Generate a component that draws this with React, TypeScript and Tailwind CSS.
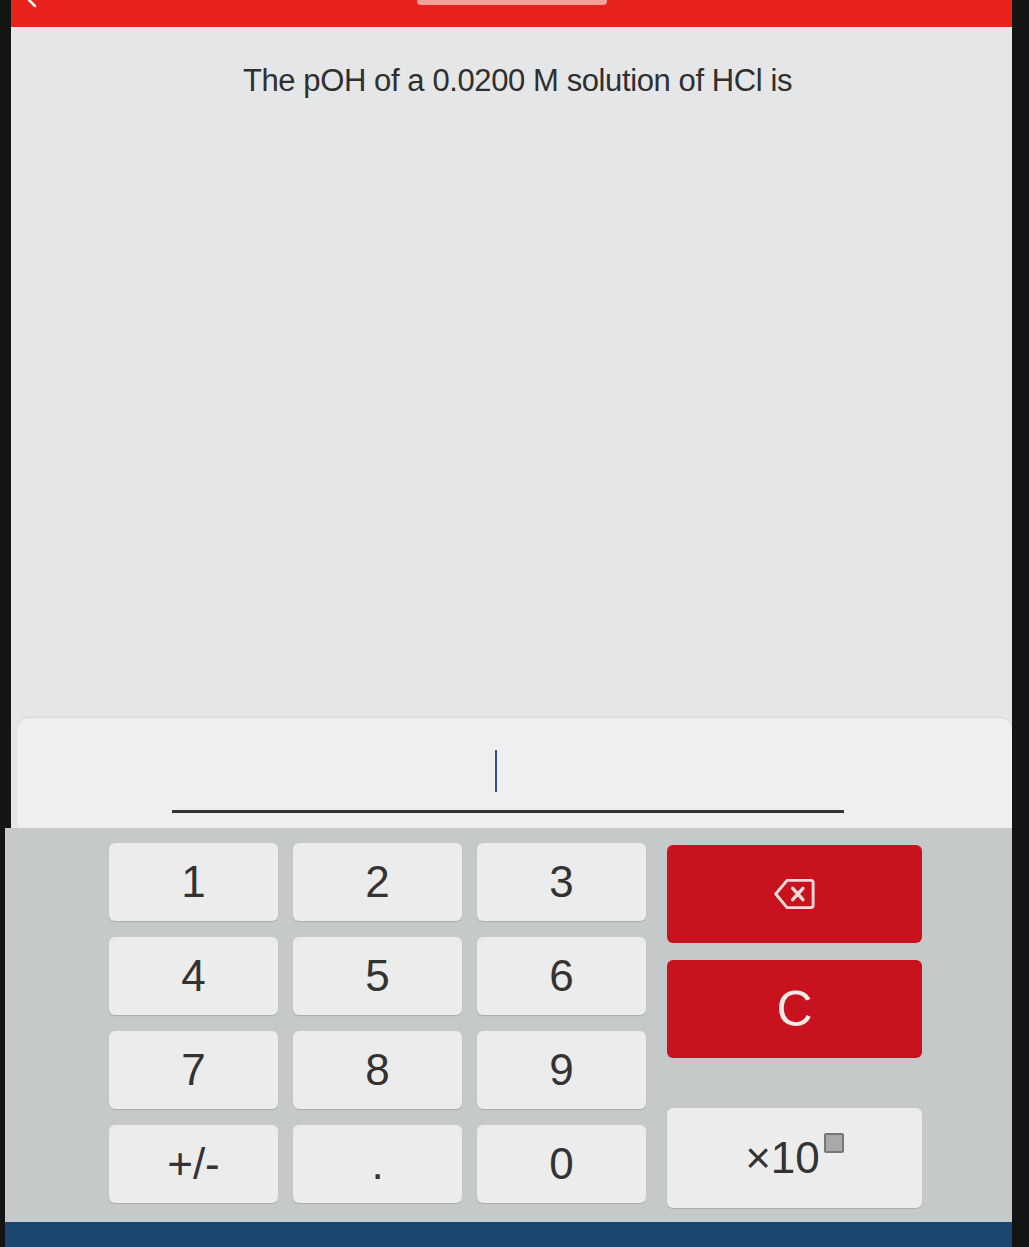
import React from 'react';

const keys = ['1', '2', '3', '4', '5', '6', '7', '8', '9', '+/-', '.', '0'];

const App: React.FC = () => {
  return (
    <div className="w-[1029px] h-[1247px] bg-[#141414] flex overflow-hidden font-['Liberation_Sans',Arial,sans-serif]">
      <div className="w-[11px] shrink-0" />
      <div className="flex-1 flex flex-col">
        {/* header */}
        <div className="h-[27px] shrink-0 bg-[#e8231c] relative flex justify-center">
          <svg className="absolute left-[14px] top-0" width="14" height="10" viewBox="0 0 14 10" fill="none" stroke="#fff" strokeWidth="2.5" strokeLinecap="round">
            <path d="M4 0 L10 6" />
          </svg>
          <div className="w-[190px] h-[5px] bg-[#f2a09a] rounded-b" />
        </div>

        {/* question */}
        <div className="flex-1 bg-[#e5e6e7] flex flex-col">
          <p className="pt-[31px] pl-[12px] text-center text-[31px] text-[#2f2f2f] tracking-[-0.4px]">
            The pOH of a 0.0200 M solution of HCl is
          </p>
        </div>

        {/* answer field */}
        <div className="bg-[#e5e6e7] pl-[6px] shrink-0">
          <div className="h-[110px] bg-[#efefef] rounded-t-[12px] flex flex-col items-center pt-[32px] pr-[8px] shadow-[0_-1px_2px_rgba(0,0,0,0.08)]">
            <div className="w-[2px] h-[42px] bg-[#3b4a9a] -ml-[30px]" />
            <div className="mt-[18px] w-[672px] h-[3px] bg-[#333] -ml-[6px]" />
          </div>
        </div>

        {/* keypad */}
        <div className="h-[394px] shrink-0 bg-[#c6c9ca] -ml-[6px] flex pt-[15px] pl-[104px] gap-[21px]">
          <div className="grid grid-cols-[169px_169px_169px] auto-rows-[78px] gap-x-[15px] gap-y-[16px]">
            {keys.map(k => (
              <button
                key={k}
                className="bg-[#ececec] rounded-[6px] text-[#333] text-[44px] flex items-center justify-center shadow-[0_1px_1px_rgba(0,0,0,0.15)]"
              >
                {k}
              </button>
            ))}
          </div>
          <div className="w-[255px] flex flex-col pt-[2px]">
            <button className="h-[98px] bg-[#c8121d] rounded-[6px] flex items-center justify-center">
              <svg width="44" height="34" viewBox="0 0 38 30" fill="none" stroke="#f4d9d9" strokeWidth="2.6" strokeLinejoin="round">
                <path d="M12 3 H33 a2 2 0 0 1 2 2 V25 a2 2 0 0 1 -2 2 H12 L2 15 Z" />
                <path d="M17 10 L26 20 M26 10 L17 20" strokeLinecap="round" strokeWidth="3" />
              </svg>
            </button>
            <button className="mt-[17px] h-[98px] bg-[#c8121d] rounded-[6px] text-[#f8e8e8] text-[50px] flex items-center justify-center">
              C
            </button>
            <button className="mt-[50px] h-[100px] bg-[#ececec] rounded-[6px] text-[#333] text-[44px] flex items-center justify-center shadow-[0_1px_1px_rgba(0,0,0,0.15)]">
              <span>×10</span>
              <span className="ml-[4px] -mt-[30px] w-[20px] h-[20px] bg-[#a9a9a9] border-2 border-[#777] rounded-[2px]" />
            </button>
          </div>
        </div>

        {/* footer */}
        <div className="h-[25px] shrink-0 bg-[#1b4670] -ml-[6px]" />
      </div>
      <div className="w-[17px] shrink-0" />
    </div>
  );
};

export default App;
